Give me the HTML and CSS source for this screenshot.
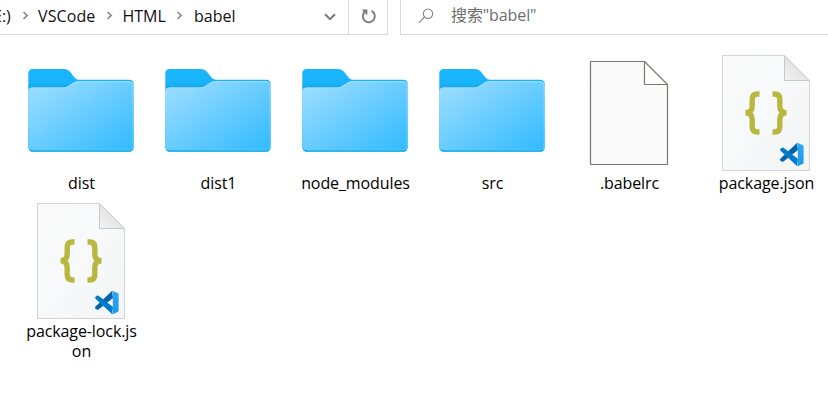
FILE: index.html
```html
<!DOCTYPE html>
<html lang="zh-CN">
<head>
<meta charset="utf-8">
<title>babel</title>
<link rel="stylesheet" href="styles.css">
</head>
<body>
<svg class="defs" width="0" height="0" aria-hidden="true">
  <defs>
    <linearGradient id="front" x1="0" y1="0" x2="1" y2="1"><stop offset="0" stop-color="#a2dfff"/><stop offset="1" stop-color="#30baff"/></linearGradient>
    <linearGradient id="tab" x1="0" y1="0" x2="0" y2="1"><stop offset="0" stop-color="#1ab6fd"/><stop offset=".17" stop-color="#19b3fa"/><stop offset=".23" stop-color="#19a4e5"/><stop offset="1" stop-color="#1eaeea"/></linearGradient>
    <linearGradient id="rim" x1="0" y1="0" x2="0" y2="1"><stop offset="0" stop-color="#a5e0ff"/><stop offset="1" stop-color="#5accff"/></linearGradient>
    <linearGradient id="paper" x1="0" y1="0" x2="1" y2="1"><stop offset="0" stop-color="#fafafa"/><stop offset=".45" stop-color="#f8f9fa"/><stop offset="1" stop-color="#f3f4f6"/></linearGradient>
    <linearGradient id="fold" x1="0" y1="1" x2="1" y2="0"><stop offset="0" stop-color="#f4f4f4"/><stop offset="1" stop-color="#d4d4d4"/></linearGradient>
    <linearGradient id="panel" x1="0" y1="0" x2="0" y2="1"><stop offset="0" stop-color="#2eaaf5"/><stop offset="1" stop-color="#1b98e6"/></linearGradient>
    <symbol id="folder" viewBox="0 0 128 128">
      <path fill="url(#tab)" d="M11.300 27.500Q11.300 23 15.800 23H47Q51 23 54 27L57.500 31.500Q59 33.800 62 33.800H112.200Q116.700 33.800 116.700 38.300V101Q116.700 105.700 112.200 105.700H15.800Q11.300 105.700 11.300 101Z"/>
      <path fill="url(#front)" d="M11.300 45Q11.300 41.500 15.300 41.500H46Q49.500 41.500 52.500 39L56.500 36.500Q58.500 35.300 61.500 35.300H112.200Q116.700 35.300 116.700 39.800V100Q116.700 104.500 112.200 104.500H15.800Q11.300 104.500 11.300 100Z"/>
      <path fill="none" stroke="url(#rim)" d="M11.800 100V46Q11.800 42 15.800 42H47Q50 42 53 39.700L57 37Q59 35.800 62 35.800H112Q116.200 35.800 116.200 40V100Q116.200 104 112 104H16Q11.800 104 11.800 100"/>
      <path fill="none" stroke="#18a6e4" stroke-width="1.200" d="M13.500 104Q14.500 105 16 105H112Q113.500 105 114.500 104"/>
    </symbol>
    <symbol id="blank" viewBox="0 0 128 128">
      <path fill="#fafafa" stroke="#777873" stroke-width="1.200" stroke-linejoin="bevel" d="M25.500 15.500H79.500L102.500 38.500V118.500H25.500ZM79.500 15.500V38.500H102.500"/>
    </symbol>
    <symbol id="json" viewBox="0 0 128 128">
      <path fill="url(#paper)" stroke="#d2d3d4" d="M20.500 9.500H82.500L107.500 34.500V124.500H20.500Z"/>
      <path fill="url(#fold)" stroke="#c8c9c9" stroke-linejoin="bevel" d="M82.500 9.500V34.500H107.500Z"/>
      <g fill="none" stroke="#b8b840" stroke-width="5.400">
        <path d="M57.500 48H55.500Q50.200 48 50.200 53.500V60Q50.200 66.700 43.500 66.700Q50.200 66.700 50.200 73.500V80.500Q50.200 86 55.500 86H57.500"/>
        <path d="M70.500 48H72.500Q77.800 48 77.800 53.500V60Q77.800 66.700 84.500 66.700Q77.800 66.700 77.800 73.500V80.500Q77.800 86 72.500 86H70.500"/>
      </g>
      <path fill="#0065a9" d="M95 97L96 104L81.500 115.500Q80.500 116.200 79.700 115.500L78.300 114.200Q77.700 113.500 78.500 112.600Z"/>
      <path fill="#007acc" d="M95 120L96 113L81.500 101.800Q80.500 101.200 79.700 101.800L78.300 103.100Q77.700 103.800 78.500 104.700Z"/>
      <path fill="url(#panel)" d="M96 97L101 99.300Q101.600 99.600 101.600 100.500V116.600Q101.600 117.400 101 117.700L96 120Q95 120.300 94.200 119.500Q95.800 119.500 95.800 118V99.200Q95.800 97.500 94.200 97.500Q95 96.700 96 97Z"/>
    </symbol>
  </defs>
</svg>
<header class="toolbar">
  <div class="address">
    <nav class="crumbs">
      <span class="drive">E:)</span>
      <svg class="sep" viewBox="0 0 7 9"><path d="M1.500 1L5.200 4.500L1.500 8"/></svg>
      <span class="c-vscode">VSCode</span>
      <svg class="sep" viewBox="0 0 7 9"><path d="M1.500 1L5.200 4.500L1.500 8"/></svg>
      <span class="c-html">HTML</span>
      <svg class="sep" viewBox="0 0 7 9"><path d="M1.500 1L5.200 4.500L1.500 8"/></svg>
      <span class="c-babel">babel</span>
    </nav>
    <svg class="chevron" viewBox="0 0 12 8"><path d="M1 1.200L6 6.200L11 1.200"/></svg>
    <div class="refresh">
      <svg viewBox="0 0 16 16"><path d="M10.500 2.900A6 6 0 1 1 4.200 3.500M1.500 2.500H5.500V6.500"/></svg>
    </div>
  </div>
  <div class="search">
    <svg viewBox="0 0 16 16"><circle cx="10" cy="5.700" r="4.700"/><path d="M6.600 9L.8 14.800"/></svg>
    <span class="query">搜索"babel"</span>
  </div>
</header>
<main class="files">
  <div class="item"><svg><use href="#folder"/></svg><span>dist</span></div>
  <div class="item"><svg><use href="#folder"/></svg><span>dist1</span></div>
  <div class="item"><svg><use href="#folder"/></svg><span>node_modules</span></div>
  <div class="item"><svg><use href="#folder"/></svg><span>src</span></div>
  <div class="item"><svg><use href="#blank"/></svg><span>.babelrc</span></div>
  <div class="item"><svg><use href="#json"/></svg><span>package.json</span></div>
  <div class="item"><svg><use href="#json"/></svg><span>package-lock.js<br>on</span></div>
</main>
</body>
</html>
```
FILE: styles.css
```css
* { box-sizing: border-box; }
body {
  margin: 0;
  width: 828px;
  height: 416px;
  overflow: hidden;
  background: #fff;
  color: #111;
  font-family: "Open Sans", "Noto Sans CJK SC", sans-serif;
  font-size: 16px;
}
.defs { display: block; }
.toolbar { display: flex; gap: 12px; height: 35px; }
.address {
  display: flex;
  width: 388px;
  border: solid #d9d9d9;
  border-width: 0 1px 1px 0;
}
.crumbs {
  display: flex;
  width: 324px;
  height: 31px;
  align-items: center;
  white-space: nowrap;
}
.crumbs span { flex: none; line-height: 20px; }
.crumbs .drive { width: 22px; margin-left: -7px; }
.crumbs .c-vscode { width: 61px; margin-left: 9.5px; letter-spacing: 0.1px; }
.crumbs .c-html { width: 47px; margin-left: 10px; }
.crumbs .c-babel { margin-left: 11px; }
.sep { flex: none; width: 7px; height: 9px; margin-left: 6.5px; }
.sep path { fill: none; stroke: #858585; stroke-width: 1.6; }
.chevron { width: 12px; height: 8px; margin: 13px 12px 0 0; }
.chevron path { fill: none; stroke: #777; stroke-width: 2; }
.refresh { width: 39px; padding: 8px 0 0 12px; border-left: 1px solid #d9d9d9; }
.refresh svg { display: block; width: 16px; height: 16px; }
.refresh path { fill: none; stroke: #777; stroke-width: 1.8; }
.search {
  display: flex;
  flex: 1;
  gap: 17px;
  padding-left: 17px;
  border: solid #d9d9d9;
  border-width: 0 0 1px 1px;
  color: #6d6d6d;
}
.search svg { width: 16px; height: 16px; margin-top: 8px; }
.search svg * { fill: none; stroke: #858585; stroke-width: 1.1; }
.query { height: 31px; line-height: 31px; letter-spacing: -0.1px; }
.files {
  display: grid;
  grid-template-columns: repeat(6, 137px);
  grid-auto-rows: 148px;
  padding: 11px 0 0 12.5px;
}
.item { display: flex; flex-direction: column; align-items: center; color: #000; text-align: center; line-height: 20px; letter-spacing: -0.1px; }
.item svg { display: block; flex: none; width: 128px; height: 128px; }
.item span { margin: -1px 0 0 1px; }
```
